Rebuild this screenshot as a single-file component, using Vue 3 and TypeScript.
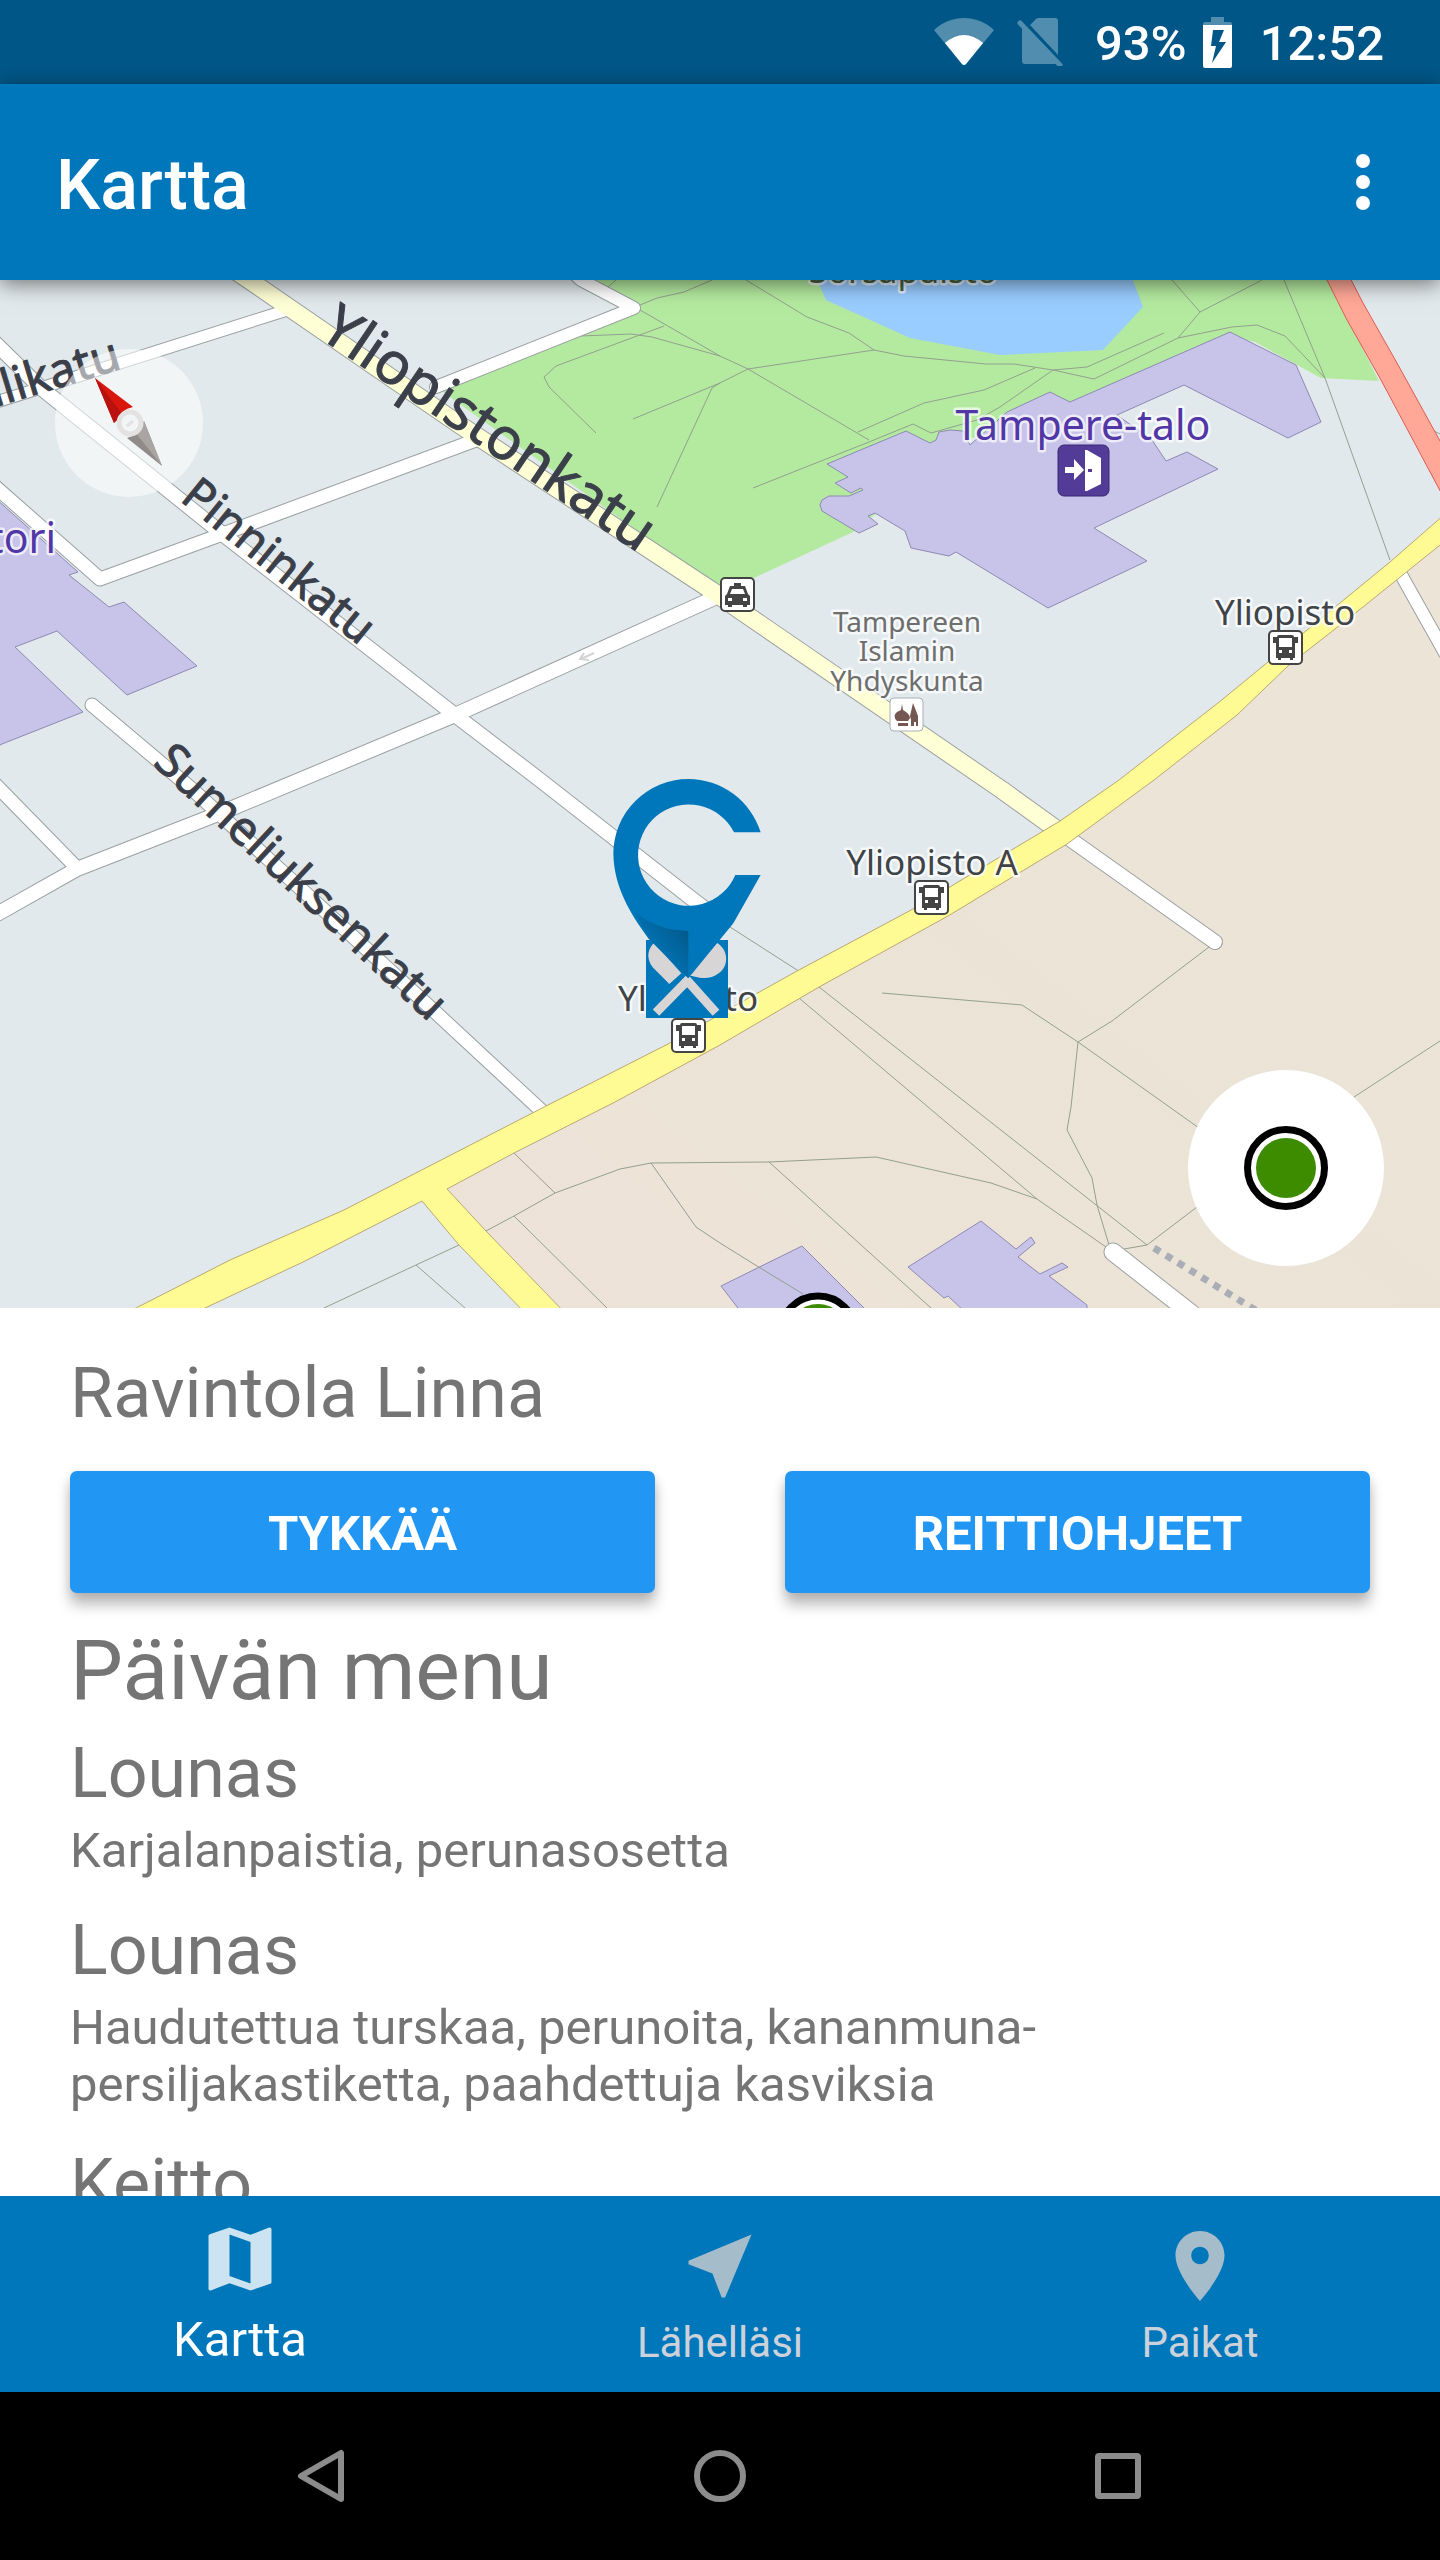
<script setup lang="ts">
import { ref } from 'vue'

interface Road { points: string; width: number }
interface Label { text: string; x: number; y: number; size: number; kind: string; angle?: number; anchor?: string }
interface MenuItem { title: string; text: string }
interface Tab { id: string; label: string; icon: string }

const streets: Road[] = [
  { points: '-10,404 44,387 284,311', width: 11 },
  { points: '-10,338 41,388 220,532 455,715 540,780 696,902 712,914', width: 14 },
  { points: '-10,482 100,579 220,535 476,440', width: 13 },
  { points: '570,270 581,280 634,308 436,387', width: 12 },
  { points: '-10,918 77,869 223,812 455,715 712,599', width: 14 },
  { points: '-10,779 77,868', width: 13 },
  { points: '92,705 193,790 433,1010 545,1114', width: 13 },
  { points: '1067,837 1215,942', width: 14 },
  { points: '1113,1252 1192,1314', width: 17 },
  { points: '1399,571 1445,653', width: 12 }
]

const avenue: Road = { points: '234,270 249,280 460,425 711,590 741,611 1002,790 1056,829', width: 17 }

const parkPaths: string[] = [
  '746,280 807,317 849,333 874,350 904,356 986,364 1014,364 1053,370 1087,367 1164,333',
  '874,350 748,369 720,383 633,419',
  '640,310 720,356 748,369 869,440',
  '581,336 631,334 652,337 720,356',
  '664,326 556,366 544,377 549,387 596,433',
  '657,507 712,388 720,383',
  '640,305 657,298 684,292 712,280',
  '608,287 616,280',
  '753,488 869,442 913,424 931,433 977,420 1000,407 1053,370',
  '858,432 924,403 984,390 1035,368',
  '1053,370 1094,379 1178,338 1200,312 1172,280',
  '1200,312 1262,280',
  '1178,338 1232,327 1257,325 1285,336 1325,378',
  '1284,280 1325,378 1390,560',
  '1430,429 1440,434'
]

const campusPaths: string[] = [
  '730,927 797,970 819,987 1147,1245',
  '799,998 1037,1199 1106,1247',
  '882,993 1022,1005 1078,1042 1230,1150',
  '1209,947 1112,1021 1078,1042 1071,1107 1067,1130 1092,1178 1097,1205 1109,1245',
  '1354,1097 1440,1041',
  '1124,1249 1147,1245 1197,1207',
  '486,1231 514,1216 555,1193 620,1169 651,1163 769,1162 876,1157 991,1183 1037,1199',
  '769,1162 931,1308',
  '514,1153 555,1193',
  '514,1216 607,1308',
  '651,1163 696,1227 720,1243 757,1266 803,1294',
  '324,1308 416,1265 459,1245',
  '416,1265 465,1308'
]

const buildings: string[] = [
  '827,464 906,431 930,443 936,440 939,432 950,430 963,431 970,445 1007,412 1050,392 1070,402 1230,332 1296,365 1321,422 1288,438 1184,385 1117,415 1152,440 1166,461 1187,452 1218,469 1094,528 1147,561 1048,608 956,552 949,556 911,548 905,531 875,513 868,516 878,524 859,533 822,511 820,505 822,500 829,496 849,496 863,490 861,488 851,493 835,483 848,477',
  '-5,498 78,572 69,575 109,607 124,602 197,666 127,695 57,631 15,647 83,712 2,744 -5,748',
  '802,1246 721,1286 741,1312 868,1312',
  '981,1221 1016,1249 1031,1237 1035,1243 1018,1257 1040,1274 1062,1263 1068,1267 1049,1276 1087,1305 1087,1312 965,1312 948,1296 944,1298 908,1267'
]

const labels: Label[] = [
  { text: 'Sorsapuisto', x: 903, y: 283, size: 34, kind: 'park' },
  { text: 'Tampere-talo', x: 1083, y: 440, size: 41, kind: 'venue' },
  { text: 'Koskitori', x: 56, y: 553, size: 41, kind: 'venue', anchor: 'end' },
  { text: 'Tampereen', x: 907, y: 632, size: 28, kind: 'minor' },
  { text: 'Islamin', x: 907, y: 661, size: 28, kind: 'minor' },
  { text: 'Yhdyskunta', x: 907, y: 691, size: 28, kind: 'minor' },
  { text: 'Yliopisto', x: 1285, y: 625, size: 35, kind: 'stop' },
  { text: 'Yliopisto A', x: 932, y: 875, size: 35, kind: 'stop' },
  { text: 'Yliopisto', x: 688, y: 1011, size: 35, kind: 'stop' },
  { text: 'llikatu', x: 123, y: 368, size: 47, kind: 'street', angle: -17, anchor: 'end' },
  { text: 'Yliopistonkatu', x: 317, y: 336, size: 58, kind: 'street', angle: 34, anchor: 'start' },
  { text: 'Pinninkatu', x: 179, y: 500, size: 46, kind: 'street', angle: 39, anchor: 'start' },
  { text: 'Sumeliuksenkatu', x: 152, y: 764, size: 47, kind: 'street', angle: 43, anchor: 'start' }
]

const busStops = [
  { x: 1268, y: 630 },
  { x: 914, y: 880 },
  { x: 671, y: 1018 }
]

const menu: MenuItem[] = [
  { title: 'Lounas', text: 'Karjalanpaistia, perunasosetta' },
  { title: 'Lounas', text: 'Haudutettua turskaa, perunoita, kananmuna-persiljakastiketta, paahdettuja kasviksia' },
  { title: 'Keitto', text: '' }
]

const tabs: Tab[] = [
  { id: 'kartta', label: 'Kartta', icon: 'M20.5 3l-.16.03L15 5.1 9 3 3.36 4.9c-.21.07-.36.25-.36.48V20.5c0 .28.22.5.5.5l.16-.03L9 18.9l6 2.1 5.64-1.9c.21-.07.36-.25.36-.48V3.5c0-.28-.22-.5-.5-.5zM15 19l-6-2.11V5l6 2.11V19z' },
  { id: 'lahella', label: 'Lähelläsi', icon: 'M21 3L3 10.53v.98l6.84 2.65L12.48 21h.98L21 3z' },
  { id: 'paikat', label: 'Paikat', icon: 'M12 2C8.13 2 5 5.13 5 9c0 5.25 7 13 7 13s7-7.75 7-13c0-3.87-3.13-7-7-7zm0 9.5c-1.38 0-2.5-1.12-2.5-2.5s1.12-2.5 2.5-2.5 2.5 1.12 2.5 2.5-1.12 2.5-2.5 2.5z' }
]

const activeTab = ref('kartta')
</script>

<template>
  <div class="app">
    <header class="status-bar">
      <svg class="wifi" viewBox="0 0 60 48" aria-hidden="true">
        <path d="M0 12C17-4 43-4 60 12L32 46Q30 48 28 46Z" fill="#fff" fill-opacity=".32" />
        <path d="M11 25Q30 9 49 25L32 46Q30 48 28 46Z" fill="#fff" />
      </svg>
      <svg class="sim" viewBox="0 0 46 48" aria-hidden="true">
        <path d="M13 7l6-6q1-1 3-1h16q3 0 3 3v34zM5 8l36 38H8q-3 0-3-3z" fill="#518dae" />
        <path d="M3 5l40 42" stroke="#518dae" stroke-width="5" stroke-linecap="round" />
      </svg>
      <span class="battery-level">93%</span>
      <svg class="battery" viewBox="0 0 29 51" aria-hidden="true">
        <path d="M8 0h13v5h6q2 0 2 3H0q0-3 2-3h6z" fill="#fff" fill-opacity=".32" />
        <path d="M0 8h29v41q0 2-2 2H2q-2 0-2-2zM10 13L8 29h5L9 46l14-21h-7l5-12z" fill="#fff" fill-rule="evenodd" />
      </svg>
      <time class="clock">12:52</time>
    </header>

    <div class="app-bar">
      <h1>Kartta</h1>
      <button class="more" type="button" aria-label="Lisää">
        <svg viewBox="0 0 14 56"><circle cx="7" cy="7" r="7" /><circle cx="7" cy="28" r="7" /><circle cx="7" cy="49" r="7" /></svg>
      </button>
    </div>

    <main class="map-area">
      <svg class="map" viewBox="0 280 1440 1028" preserveAspectRatio="xMidYMid slice" role="img" aria-label="Kartta">
        <defs>
          <linearGradient id="fold" x1="0" y1="1" x2="1" y2="0">
            <stop offset=".3" stop-color="#0077bb" />
            <stop offset="1" stop-color="#04527f" />
          </linearGradient>
          <linearGradient id="campus" x1="0" y1="1" x2="1" y2="0">
            <stop offset="0" stop-color="#eee2d8" />
            <stop offset=".5" stop-color="#ebe4d6" />
            <stop offset="1" stop-color="#ede4d8" />
          </linearGradient>
        </defs>
        <rect y="280" width="1440" height="1028" fill="#e1e9ec" />
        <polygon points="590,275 634,308 436,387 720,590 756,577 853,532 878,512 950,445 1075,405 1230,336 1255,342 1321,378 1379,381 1326,275" fill="#b4ea9f" />
        <polygon points="815,275 826,300 910,338 1000,355 1103,350 1143,307 1131,275" fill="#99ccff" />
        <polygon points="447,1189 615,1102 819,987 948,916 1067,844 1154,780 1289,665 1445,540 1445,1312 565,1312 486,1231" fill="url(#campus)" />

        <polygon v-for="(b, i) in buildings" :key="'b' + i" class="building" :points="b" />
        <polyline v-for="(p, i) in parkPaths" :key="'p' + i" class="footpath" :points="p" />
        <polyline v-for="(p, i) in campusPaths" :key="'c' + i" class="footpath" :points="p" />
        <path d="M1154 1248L1257 1311" stroke="#a9adb5" stroke-width="7" stroke-dasharray="7 7" fill="none" />

        <polyline v-for="(s, i) in streets" :key="'sc' + i" class="road casing" :points="s.points" :stroke-width="s.width + 2" />
        <polyline class="road casing" :points="avenue.points" :stroke-width="avenue.width + 2" />
        <polyline v-for="(s, i) in streets" :key="'sf' + i" class="road street" :points="s.points" :stroke-width="s.width" />
        <polyline class="road avenue" :points="avenue.points" :stroke-width="avenue.width" />
        <path d="M594 653l-13 6M584 653l-4 6 9 1" stroke="#d4d4d4" stroke-width="2" fill="none" />

        <polygon class="main-road" points="120,1316 136,1308 230,1260 344,1210 548,1105 668,1044 754,995 797,971 913,909 1060,821 1119,780 1218,703 1390,562 1445,514 1445,541 1363,607 1289,665 1237,715 1154,780 1067,844 948,916 819,987 720,1045 615,1102 514,1153 447,1189 486,1231 568,1316 528,1316 459,1245 422,1201 303,1262 188,1316" />
        <polygon points="1322,270 1346,270 1363,303 1397,363 1445,450 1445,500 1381,380 1347,320" fill="#ffa897" stroke="#e05a50" />

        <text
          v-for="(l, i) in labels"
          :key="'l' + i"
          :class="['label', l.kind]"
          :x="l.x"
          :y="l.y"
          :font-size="l.size"
          :text-anchor="l.anchor ?? 'middle'"
          :transform="l.angle ? `rotate(${l.angle} ${l.x} ${l.y})` : undefined"
        >{{ l.text }}</text>

        <g v-for="(s, i) in busStops" :key="'bus' + i" :transform="`translate(${s.x} ${s.y})`">
          <rect x="1" y="1" width="33" height="33" rx="4" fill="#fff" stroke="#444" stroke-width="2" />
          <path d="M11 5h13q2 0 2 2h4v6h-3v15h-2v2h-3v-2h-9v2H10v-2H8V13H5V7h4q0-2 2-2zM11 8v9h13V8zM11 20v3h3v-3zM21 20v3h3v-3z" fill="#444" fill-rule="evenodd" />
        </g>

        <g transform="translate(720 577)">
          <rect x="1" y="1" width="33" height="33" rx="4" fill="#fff" stroke="#444" stroke-width="2" />
          <path d="M14 6h7v3h4l3 8 2 2v9h-3v2h-4v-2H12v2H8v-2H5v-9l2-2 3-8h4zM12 12l-2 5h15l-2-5zM8 21v3h4v-3zM23 21v3h4v-3z" fill="#444" fill-rule="evenodd" />
        </g>

        <g transform="translate(889 697)">
          <rect x="1" y="1" width="33" height="33" rx="4" fill="#fff" stroke="#a9aeb8" stroke-width="1" />
          <path d="M13 7l1 6q7 4 7 8l-2 3H8q-5-5 0-9l4-2zM9 26h10v3H9zM24 6l5 13v10h-2v-4h-2v4h-3v-6l-1-4z" fill="#735750" />
        </g>

        <g transform="translate(1057 444)">
          <rect x="1" y="1" width="51" height="51" rx="6" fill="#533b98" stroke="#382a75" stroke-width="1" />
          <path d="M28 6h2l14 8v26l-14 7h-2zM8 23h9v-8l10 11-10 10v-7H8z" fill="#fff" />
          <rect x="31" y="25" width="4" height="3" fill="#533b98" />
        </g>

        <svg x="580" y="750" width="240" height="320" viewBox="0 0 720 960">
          <rect x="198" y="570" width="246" height="234" fill="#0077bb" />
          <path d="M222 578C198 602 198 636 230 664l38 38 36-32z" fill="#d8d5d7" />
          <path d="M410 578c36 20 38 70 6 92-22 18-52 16-70 10l-22-4z" fill="#d8d5d7" />
          <path d="M228 788L322 692L408 788" stroke="#d8d5d7" stroke-width="27" fill="none" />
          <path d="M542 247A228 228 0 0 0 325 87A225 225 0 0 0 100 312C102 410 150 490 205 565L325 685 460 520 542 375H466A152 152 0 1 1 462 247Z" fill="#0077bb" />
          <path d="M165 487C220 530 270 542 325 543V685L205 565Z" fill="url(#fold)" />
        </svg>

        <circle cx="818" cy="1334" r="38" fill="#fff" stroke="#000" stroke-width="7" />
        <circle cx="818" cy="1334" r="30" fill="#3d8c00" />
      </svg>

      <button class="compass" type="button" aria-label="Pohjoinen ylös">
        <svg viewBox="0 0 148 148">
          <path d="M40 29L78 58Q66 60 59 74z" fill="#d8170f" />
          <path d="M40 29L68 66 59 74z" fill="#b9110d" />
          <path d="M107 117L72 89Q84 86 89 72z" fill="#908a89" />
          <path d="M107 117L80 83 89 72z" fill="#aaa5a3" />
          <circle cx="75" cy="74" r="11" fill="none" stroke="#e4e2e1" stroke-width="5" />
          <path d="M72 77l6-5" stroke="#e4e2e1" stroke-width="3" />
        </svg>
      </button>
      <button class="locate" type="button" aria-label="Oma sijainti"><span class="locate-dot"></span></button>
    </main>

    <section class="sheet">
      <h2 class="place-name">Ravintola Linna</h2>
      <div class="actions">
        <button type="button">TYKKÄÄ</button>
        <button type="button">REITTIOHJEET</button>
      </div>
      <h3 class="menu-title">Päivän menu</h3>
      <article v-for="(m, i) in menu" :key="i" class="dish">
        <h4>{{ m.title }}</h4>
        <p v-if="m.text">{{ m.text }}</p>
      </article>
    </section>

    <nav class="tabs">
      <a
        v-for="t in tabs"
        :key="t.id"
        :href="'#' + t.id"
        :class="{ active: t.id === activeTab }"
        @click.prevent="activeTab = t.id"
      >
        <svg viewBox="0 0 24 24" aria-hidden="true"><path :d="t.icon" /></svg>
        <span>{{ t.label }}</span>
      </a>
    </nav>

    <footer class="system-nav">
      <button type="button" aria-label="Takaisin">
        <svg viewBox="0 0 56 56"><path d="M47 5v46L7 28z" /></svg>
      </button>
      <button type="button" aria-label="Koti">
        <svg viewBox="0 0 56 56"><circle cx="28" cy="28" r="23" /></svg>
      </button>
      <button type="button" aria-label="Viimeisimmät">
        <svg viewBox="0 0 56 56"><rect x="8" y="8" width="40" height="40" rx="1" /></svg>
      </button>
    </footer>
  </div>
</template>

<style>
body {
  margin: 0;
  background: #fff;
}
</style>

<style scoped>
.app {
  display: flex;
  flex-direction: column;
  height: 100vh;
  overflow: hidden;
  font-family: Roboto, "Liberation Sans", sans-serif;
  background: #fff;
}

button {
  border: 0;
  padding: 0;
  font-family: inherit;
  cursor: pointer;
}

h1, h2, h3, h4, p {
  margin: 0;
  font-weight: 400;
}

.status-bar {
  flex: none;
  display: flex;
  align-items: center;
  justify-content: flex-end;
  height: 84px;
  padding-right: 56px;
  background: #005787;
  color: #fff;
  font-size: 49px;
  font-weight: 500;
  line-height: 84px;
}

.wifi {
  width: 60px;
  height: 48px;
  margin-right: 23px;
}

.sim {
  width: 46px;
  height: 48px;
  margin-right: 32px;
}

.battery {
  width: 29px;
  height: 51px;
  margin: 0 28px 0 16px;
}

.battery-level,
.clock {
  padding-top: 4px;
}

.app-bar {
  flex: none;
  position: relative;
  z-index: 1;
  display: flex;
  align-items: center;
  justify-content: space-between;
  height: 196px;
  padding: 0 56px;
  background: #0077bb;
  color: #fff;
  box-shadow: 0 4px 20px rgba(0, 0, 0, .5);
}

.app-bar h1 {
  padding-top: 6px;
  font-size: 70px;
  font-weight: 500;
  line-height: 82px;
}

.more {
  display: flex;
  justify-content: center;
  width: 42px;
  background: none;
}

.more svg {
  width: 14px;
  height: 56px;
  fill: #fff;
}

.map-area {
  flex: none;
  position: relative;
  aspect-ratio: 1440 / 1028;
  overflow: hidden;
}

.map {
  display: block;
  width: 100%;
  height: 100%;
}

.building {
  fill: #c8c3e9;
  stroke: #8e89b3;
}

.footpath {
  fill: none;
  stroke: #93a08f;
}

.road {
  fill: none;
  stroke-linecap: round;
  stroke-linejoin: round;
}

.casing {
  stroke: #9ba0a2;
}

.street {
  stroke: #fff;
}

.avenue {
  stroke: #ffffd6;
}

.main-road {
  fill: #fffb94;
  stroke: #bba772;
}

.label {
  font-family: "Noto Sans", "Open Sans", sans-serif;
  paint-order: stroke;
  stroke: rgba(255, 255, 255, .7);
  stroke-width: 5px;
  stroke-linejoin: round;
}

.stop {
  fill: #404348;
}

.park {
  fill: #47603f;
}

.venue {
  fill: #5136a5;
}

.minor {
  fill: #6e6e6e;
}

.street.label {
  fill: #3b3f4a;
  stroke: #3b3f4a;
  stroke-width: 1px;
}

.compass,
.locate {
  position: absolute;
  border-radius: 50%;
}

.compass {
  top: 69px;
  left: 55px;
  width: 148px;
  height: 148px;
  background: rgba(255, 255, 255, .55);
}

.compass svg {
  display: block;
  width: 100%;
}

.locate {
  right: 56px;
  bottom: 42px;
  display: grid;
  place-items: center;
  width: 196px;
  height: 196px;
  background: #fff;
}

.locate-dot {
  box-sizing: border-box;
  width: 84px;
  height: 84px;
  padding: 5px;
  border: 7px solid #000;
  border-radius: 50%;
  background: #3d8c00 content-box;
}

.sheet {
  flex: 1;
  position: relative;
  min-height: 0;
  padding: 44px 70px 0;
  overflow: hidden;
  background: #fff;
  color: #757575;
}

.place-name,
.dish h4 {
  font-size: 70px;
  line-height: 82px;
}

.actions {
  display: grid;
  grid-template-columns: 1fr 1fr;
  gap: 130px;
  margin-top: 37px;
}

.actions button {
  height: 122px;
  padding-top: 2px;
  border-radius: 7px;
  background: #2196f3;
  color: #fff;
  font-size: 49px;
  font-weight: 700;
  line-height: 57px;
  box-shadow: 0 12px 14px rgba(0, 0, 0, .26), 0 2px 10px rgba(0, 0, 0, .1);
}

.menu-title {
  margin: 29px 0 12px;
  font-size: 84px;
  line-height: 98px;
}

.dish {
  margin-bottom: 30px;
}

.dish p {
  margin-top: 8px;
  font-size: 49px;
  line-height: 57px;
}

.tabs {
  flex: none;
  display: grid;
  grid-template-columns: repeat(3, 1fr);
  height: 196px;
  background: #0077bb;
}

.tabs a {
  display: flex;
  flex-direction: column;
  align-items: center;
  gap: 10px;
  padding-top: 28px;
  color: #ccd1da;
  font-size: 42px;
  line-height: 49px;
  text-decoration: none;
}

.tabs svg {
  width: 84px;
  height: 84px;
  fill: #a5bdca;
}

.tabs a.active {
  padding-top: 21px;
  color: #fff;
  font-size: 49px;
  line-height: 57px;
}

.tabs a.active svg {
  fill: #cce4f1;
}

.system-nav {
  flex: none;
  display: grid;
  grid-template-columns: repeat(3, 1fr);
  align-items: center;
  height: 168px;
  padding: 0 123px;
  background: #000;
}

.system-nav button {
  display: flex;
  justify-content: center;
  background: none;
}

.system-nav svg {
  width: 56px;
  height: 56px;
  fill: none;
  stroke: #8c8c8c;
  stroke-width: 6;
  stroke-linejoin: round;
}
</style>
